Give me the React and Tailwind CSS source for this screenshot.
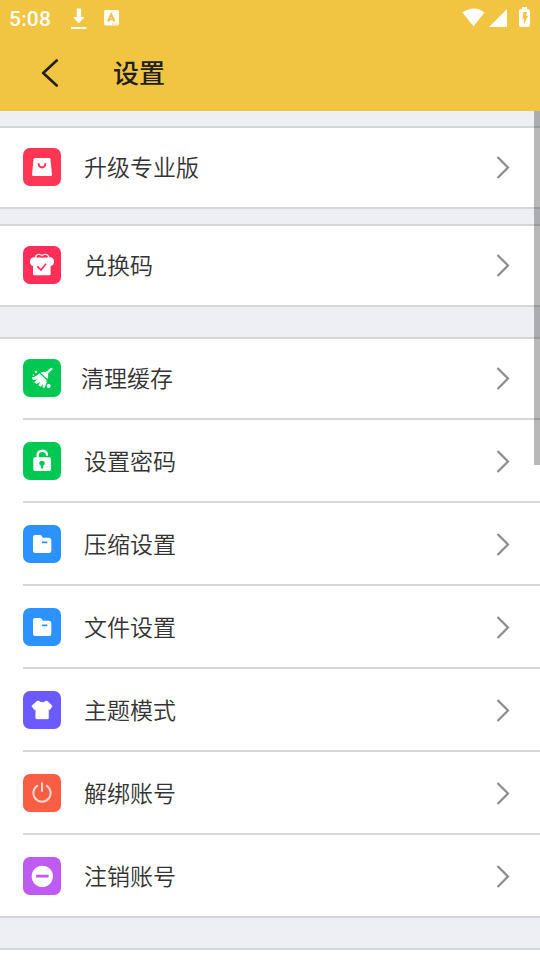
function Bag() {
  return (
    <>
      <path d="M37 30H77Q82 30 82.500 34L87 80Q87 84 83 84H31Q27 84 27 80L31.500 34Q32 30 37 30Z" fill="#fff" />
      <path d="M47 48C48 62 66 62 67 48" fill="none" stroke="#ff3654" strokeWidth="5.500" strokeLinecap="round" />
    </>
  )
}

function Gift() {
  return (
    <>
      <path d="M37 34C39 23 52 23 57 29C62 23 75 23 78 34" fill="none" stroke="#ffe3e8" strokeWidth="4" />
      <path d="M33 34H81C88 34 93 38 93 48C93 55 89 59 83 60V84Q83 88 79 88H34Q30 88 30 84V60C25 59 21 55 21 48C21 38 26 34 33 34Z" fill="#fff" />
      <path d="M42 34Q50 31 57 35Q65 31 73 34" fill="none" stroke="#ff2e58" strokeWidth="2" />
      <path d="M43 61L54 72L69 53" fill="none" stroke="#ff2e58" strokeWidth="5" />
    </>
  )
}

function Broom() {
  return (
    <g fill="#fff">
      <path d="M82 28Q88 24 89 30L75 44Q77 53 73 60L53 41Q60 37 68 40Z" />
      <path d="M49 43L71 64Q70 77 65 87L58 84L61 75L53 83L46 79L52 69L40 75L34 69L43 61L30 63L26 55Q40 54 49 43Z" />
      <circle cx="39" cy="39" r="3.500" />
      <circle cx="31" cy="48" r="2" />
      <circle cx="77" cy="81" r="6" />
      <circle cx="69" cy="71" r="2" />
    </g>
  )
}

function Lock() {
  return (
    <>
      <path d="M44 50V41C43 22 69 22 72 38" fill="none" stroke="#fff" strokeWidth="7" strokeLinecap="round" />
      <rect x="31" y="46" width="53" height="41" rx="5" fill="#fff" />
      <circle cx="57" cy="64" r="8" fill="#00c853" />
      <path d="M57 66V77" stroke="#00c853" strokeWidth="6" strokeLinecap="round" />
    </>
  )
}

function Folder() {
  return (
    <>
      <path d="M36 30H51Q56 30 58 35L59 38H78Q85 39 85 45V77Q85 84 78 84H37Q30 84 30 77V37Q30 30 36 30Z" fill="#fff" />
      <path d="M57 52H73" stroke="#2c92ff" strokeWidth="5" />
    </>
  )
}

function Shirt() {
  return (
    <path
      d="M42 30H48C51 35 65 35 68 30H73L88 45L80 57L77 55V81Q77 84 74 84H41Q38 84 38 81V55L34 57L26 45Z"
      fill="#fff"
      stroke="#fff"
      strokeLinejoin="round"
    />
  )
}

function Power() {
  return (
    <g fill="none" stroke="#ffd5cd" strokeWidth="6">
      <path d="M45 34A26 26 0 1 0 69 34" />
      <path d="M57 25V53" />
    </g>
  )
}

function Minus() {
  return (
    <>
      <circle cx="58" cy="58" r="32" fill="#fff" />
      <path d="M39 57.500H77" stroke="#bf5af2" strokeWidth="8" />
    </>
  )
}

const upgrade = [{ label: '升级专业版', icon: Bag, color: 'bg-[#ff3654]' }]
const redeem = [{ label: '兑换码', icon: Gift, color: 'bg-[#ff2e58]' }]
const general = [
  { label: '清理缓存', icon: Broom, color: 'bg-[#00c853]', gap: 'ml-5' },
  { label: '设置密码', icon: Lock, color: 'bg-[#00c853]' },
  { label: '压缩设置', icon: Folder, color: 'bg-[#2c92ff]' },
  { label: '文件设置', icon: Folder, color: 'bg-[#2c92ff]' },
  { label: '主题模式', icon: Shirt, color: 'bg-[#6d5aff]' },
  { label: '解绑账号', icon: Power, color: 'bg-[#f95d43]' },
  { label: '注销账号', icon: Minus, color: 'bg-[#bf5af2]' },
]

function Row({ item, first }) {
  const Icon = item.icon
  return (
    <div className={first ? 'flex h-[79px] pt-5' : 'ml-[23px] flex h-[83px] border-t-2 border-[#d6d6d6] pt-[22px]'}>
      <div className={`${first ? 'ml-[23px]' : ''} ${item.color} size-[38px] shrink-0 overflow-hidden rounded-[7px]`}>
        <svg viewBox="0 0 114 114" className="size-full">
          <Icon />
        </svg>
      </div>
      <span className={`${item.gap || 'ml-[23px]'} h-9 text-[23px] leading-9 font-[350] text-[#333]`}>
        {item.label}
      </span>
      <svg viewBox="0 0 14 24" className="mt-[7px] mr-[30px] ml-auto h-6 w-3.5 shrink-0">
        <path d="M1.500 2L12 12.500L1.500 23" fill="none" stroke="#8c8c8c" strokeWidth="2.200" />
      </svg>
    </div>
  )
}

function Group({ items }) {
  return (
    <section className="border-y-2 border-[#d6d6d6] bg-white">
      {items.map((item, i) => (
        <Row key={item.label} item={item} first={i === 0} />
      ))}
    </section>
  )
}

function StatusBar() {
  return (
    <div className="flex h-9 items-center pl-[9px] text-white">
      <span className="w-[62px] pt-0.5 font-[Roboto] text-[21px] leading-9 font-medium tracking-[0.2px]">5:08</span>
      <svg viewBox="0 0 16 22" className="mt-px h-[22px] w-4" fill="currentColor">
        <path d="M5.700 0.500H10V9H13.500L7.800 15.500L2 9H5.700ZM0 19H15.300V21H0Z" />
      </svg>
      <svg viewBox="0 0 16 16" className="ml-[17px] size-4">
        <rect width="15" height="15.500" rx="1.800" fill="currentColor" />
        <path d="M4 11.500L7.200 4.300L10.500 11.500M5.200 9.300H9.400" fill="none" stroke="#f1c541" strokeWidth="2" />
        <path d="M8 14H14" stroke="#f1c541" strokeWidth="1" strokeDasharray="1.200 1" />
      </svg>
      <svg viewBox="0 0 68 22" className="mr-2.5 mb-0.5 ml-auto h-[22px] w-[68px]" fill="currentColor">
        <path d="M0.500 6.500Q12 -1.500 22.500 6.500L11.500 20.500Z" />
        <path d="M27 21L45 3V21Z" />
        <path d="M60 1H65V3H66Q68 3 68 5V19Q68 21 66 21H59Q57 21 57 19V5Q57 3 59 3H60Z" />
        <path d="M61.500 6H65L64 10H66L62 18V12.500H60.500Z" fill="#f1c541" />
      </svg>
    </div>
  )
}

export default function App() {
  return (
    <div className="relative h-[960px] w-[540px] overflow-hidden bg-[#eeeff5] font-['Noto_Sans_CJK_SC',sans-serif]">
      <header className="h-[111px] bg-[#f1c541]">
        <StatusBar />
        <div className="flex h-[73px] items-center">
          <svg viewBox="0 0 18 28" className="ml-[41px] h-7 w-[18px]">
            <path d="M15.700 1.500L2.200 14L15.700 26.500" fill="none" stroke="#202020" strokeWidth="2.600" strokeLinecap="round" strokeLinejoin="round" />
          </svg>
          <h1 className="mb-0.5 ml-[54px] text-[26px] leading-9 font-medium text-[#202020]">设置</h1>
        </div>
      </header>

      <main>
        <div className="pt-[15px]">
          <Group items={upgrade} />
        </div>
        <div className="pt-[15px]">
          <Group items={redeem} />
        </div>
        <div className="pt-[30px]">
          <Group items={general} />
        </div>
        <div className="mt-[30px] h-3 border-t-2 border-[#d6d6d6] bg-white" />
      </main>

      {/* Scrollbar thumb */}
      <div className="absolute top-[111px] right-0 h-[354px] w-1.5 bg-black/28" />
    </div>
  )
}
